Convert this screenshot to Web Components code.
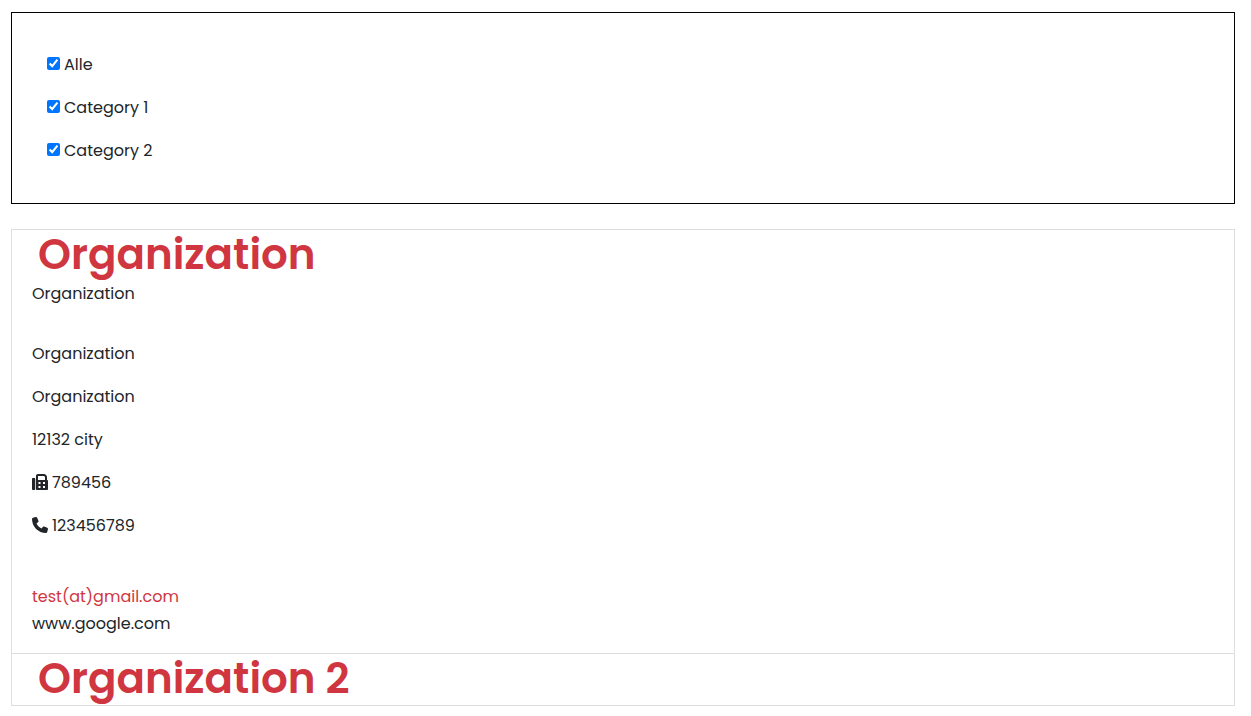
<!DOCTYPE html>
<html lang="de">
<head>
<meta charset="utf-8">
<meta name="viewport" content="width=device-width, initial-scale=1">
<title>Organizations</title>
<style>
  body {
    margin: 12px 16px 10px 11px;
    background: #fff;
    color: #212529;
    font: 16px/27px Poppins, Inter, sans-serif;
  }
</style>
</head>
<body>
<category-filter>
  <category-option>Alle</category-option>
  <category-option>Category 1</category-option>
  <category-option>Category 2</category-option>
</category-filter>

<organization-list>
  <organization-card heading="Organization">
    <organization-address>
      <span slot="name">Organization</span>
      <contact-line>Organization</contact-line>
      <contact-line>Organization</contact-line>
      <contact-line>12132 city</contact-line>
      <contact-line icon="fax">789456</contact-line>
      <contact-line icon="phone">123456789</contact-line>
      <text-link slot="links" accent href="#mail">test(at)gmail.com</text-link>
      <text-link slot="links" href="#website">www.google.com</text-link>
    </organization-address>
  </organization-card>
  <organization-card heading="Organization 2"></organization-card>
</organization-list>

<script>
  class ShadowElement extends HTMLElement {
    constructor() {
      super();
      this.attachShadow({ mode: 'open' });
    }
    connectedCallback() {
      this.shadowRoot.innerHTML = this.render();
    }
  }

  customElements.define('category-filter', class extends ShadowElement {
    render() {
      return `<style>
        :host { display: flex; flex-direction: column; gap: 16px; padding: 38px 35px 39px; border: 1px solid #000; }
      </style><slot></slot>`;
    }
  });

  customElements.define('category-option', class extends ShadowElement {
    render() {
      return `<style>
        :host { display: block; }
        label { display: inline-flex; align-items: center; gap: 4px; }
        input { width: 13px; height: 13px; margin: 0 0 2px; }
      </style><label><input type="checkbox" checked><slot></slot></label>`;
    }
  });

  customElements.define('organization-list', class extends ShadowElement {
    render() {
      return `<style>
        :host { display: block; margin-top: 25px; border-top: 1px solid #dedede; }
      </style><slot></slot>`;
    }
  });

  customElements.define('organization-card', class extends ShadowElement {
    render() {
      return `<style>
        :host { display: block; padding-bottom: 1px; border: 1px solid #dedede; border-top: 0; }
        h2 { margin: 0; padding: 0 26px; color: #d0363f; font-size: 42px; font-weight: 600; line-height: 50px; }
      </style><h2>${this.getAttribute('heading')}</h2><slot></slot>`;
    }
  });

  customElements.define('organization-address', class extends ShadowElement {
    render() {
      return `<style>
        :host { display: block; padding: 0 20px 15px; }
        .lines { display: flex; flex-direction: column; gap: 16px; margin: 33px 0 44px; }
        .links { display: flex; flex-direction: column; align-items: flex-start; }
      </style>
      <slot name="name"></slot>
      <div class="lines"><slot></slot></div>
      <div class="links"><slot name="links"></slot></div>`;
    }
  });

  const icons = {
    fax: 'M128 64v128h64V64h194.700L416 93.300V192h64V93.300c0-17-6.700-33.300-18.700-45.300L432 18.700C420 6.700 403.700 0 386.700 0H192c-35.300 0-64 28.700-64 64zM0 160v320c0 17.700 14.300 32 32 32h40c17.700 0 32-14.300 32-32V160c0-17.700-14.300-32-32-32H32c-17.700 0-32 14.300-32 32zm480 32H128v288c0 17.700 14.300 32 32 32h320c17.700 0 32-14.300 32-32V224c0-17.700-14.300-32-32-32zM208 256h64v64h-64zm144 0h64v64h-64zM208 384h64v64h-64zm144 0h64v64h-64z',
    phone: 'M164.900 24.600c-7.700-18.600-28-28.500-47.400-23.200l-88 24C12.100 30.200 0 46 0 64c0 247.400 200.600 448 448 448 18 0 33.800-12.100 38.600-29.500l24-88c5.300-19.400-4.600-39.700-23.200-47.400l-96-40c-16.300-6.800-35.200-2.100-46.300 11.600L304.700 368C234.300 334.700 177.300 277.700 144 207.300L193.300 167c13.700-11.200 18.400-30 11.600-46.300l-40-96z'
  };

  customElements.define('contact-line', class extends ShadowElement {
    render() {
      const path = icons[this.getAttribute('icon')];
      const icon = path
        ? `<svg viewBox="0 0 512 512" aria-hidden="true"><path fill="currentColor" d="${path}" fill-rule="evenodd"/></svg>`
        : '';
      return `<style>
        :host { display: flex; align-items: center; gap: 4px; }
        svg { width: 16px; height: 16px; margin-bottom: 1px; }
      </style>${icon}<slot></slot>`;
    }
  });

  customElements.define('text-link', class extends ShadowElement {
    render() {
      return `<style>
        :host { display: block; }
        a { color: inherit; text-decoration: none; }
        :host([accent]) a { color: #d0363f; }
      </style><a href="${this.getAttribute('href')}"><slot></slot></a>`;
    }
  });
</script>
</body>
</html>
